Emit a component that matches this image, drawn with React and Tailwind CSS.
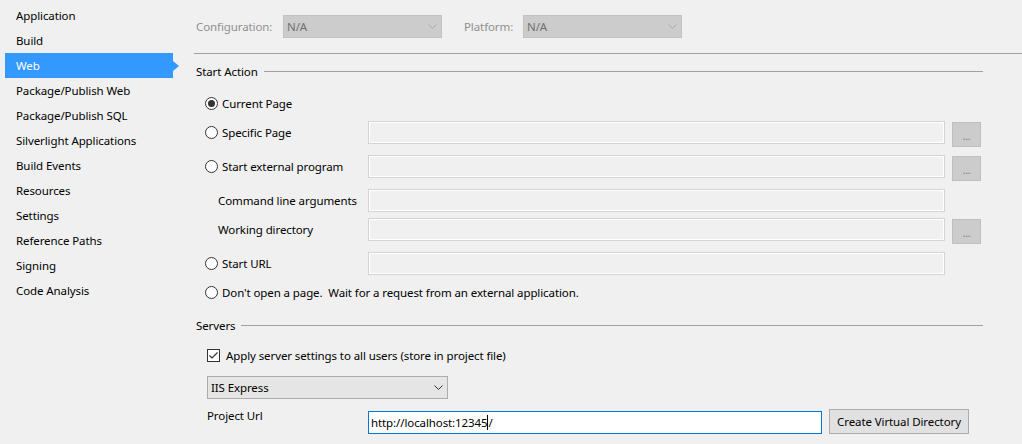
import React from "react";

const NAV = [
  "Application",
  "Build",
  "Web",
  "Package/Publish Web",
  "Package/Publish SQL",
  "Silverlight Applications",
  "Build Events",
  "Resources",
  "Settings",
  "Reference Paths",
  "Signing",
  "Code Analysis",
];

function T({ children, className = "" }) {
  return <span className={"pt-[1px] whitespace-nowrap " + className}>{children}</span>;
}

function Chevron({ color = "#333" }) {
  return (
    <svg width="9" height="5" viewBox="0 0 9 5" className="shrink-0">
      <path d="M0.5 0.5 L4.5 4.5 L8.5 0.5" fill="none" stroke={color} strokeWidth="1" />
    </svg>
  );
}

function Radio({ checked }) {
  return (
    <div className="w-[13px] h-[13px] shrink-0 rounded-full border border-[#333] bg-white flex items-center justify-center">
      {checked && <div className="w-[7px] h-[7px] rounded-full bg-[#333]" />}
    </div>
  );
}

function TextBox() {
  return (
    <div className="w-[577px] h-[23px] shrink-0 border border-[#d4d4d4] shadow-[inset_0_0_0_1px_#ffffff] bg-[#f0f0f0]" />
  );
}

function Browse() {
  return (
    <div className="ml-[7px] mt-[1px] self-start w-[29px] h-[25px] shrink-0 bg-[#cccccc] border border-[#bfbfbf] flex items-center justify-center text-[10px] leading-none text-[#7a7a7a] pt-[3px]">
      ...
    </div>
  );
}

function SectionHeader({ title }) {
  return (
    <div className="h-[18px] flex items-center pl-[16px]">
      <T className="text-black">{title}</T>
      <div className="flex-1 h-px bg-[#a0a0a0] ml-[6px] mr-[39px]" />
    </div>
  );
}

export default function App() {
  return (
    <div className="w-[1022px] h-[444px] overflow-hidden bg-[#f0f0f0] flex font-['Noto_Sans',sans-serif] text-[11.5px] tracking-[-0.1px] text-black">
      {/* Sidebar */}
      <div className="w-[180px] shrink-0 pt-[3px]">
        {NAV.map((it) =>
          it === "Web" ? (
            <div
              key={it}
              className="relative h-[25px] ml-[5px] w-[168px] bg-[#3399ff] text-white flex items-center pl-[11px]"
            >
              <T>Web</T>
              <div className="absolute left-full top-1/2 -translate-y-1/2 w-0 h-0 border-y-[5px] border-y-transparent border-l-[6px] border-l-[#3399ff]" />
            </div>
          ) : (
            <div key={it} className="h-[25px] flex items-center pl-[16px]">
              <T>{it}</T>
            </div>
          )
        )}
      </div>

      {/* Main */}
      <div className="flex-1 min-w-0 flex flex-col">
        <div className="h-[53px] pt-[15px] pl-[16px] flex items-start">
          <div className="w-[87px] h-[23px] flex items-center text-[#8f8f8f]">
            <T>Configuration:</T>
          </div>
          <div className="w-[159px] h-[23px] bg-[#cccccc] border border-[#c2c2c2] flex items-center pl-[3px] pr-[4px] text-[#707070]">
            <T className="flex-1">N/A</T>
            <Chevron color="#a8a8a8" />
          </div>
          <div className="ml-[22px] w-[59px] h-[23px] flex items-center text-[#8f8f8f]">
            <T>Platform:</T>
          </div>
          <div className="w-[159px] h-[23px] bg-[#cccccc] border border-[#c2c2c2] flex items-center pl-[3px] pr-[4px] text-[#707070]">
            <T className="flex-1">N/A</T>
            <Chevron color="#a8a8a8" />
          </div>
        </div>
        <div className="ml-[14px] h-px bg-[#a0a0a0]" />

        <div className="mt-[8px]">
          <SectionHeader title="Start Action" />
        </div>

        <div className="pl-[25px] flex flex-col">
          <div className="mt-[13px] h-[20px] flex items-center gap-[4px]">
            <Radio checked />
            <T>Current Page</T>
          </div>

          <div className="mt-[8px] h-[23px] flex items-center">
            <div className="w-[163px] flex items-center gap-[4px]">
              <Radio />
              <T>Specific Page</T>
            </div>
            <TextBox />
            <Browse />
          </div>

          <div className="mt-[11px] h-[23px] flex items-center">
            <div className="w-[163px] flex items-center gap-[4px]">
              <Radio />
              <T>Start external program</T>
            </div>
            <TextBox />
            <Browse />
          </div>

          <div className="mt-[11px] h-[23px] flex items-center">
            <div className="w-[163px] pl-[13px] flex items-center">
              <T>Command line arguments</T>
            </div>
            <TextBox />
          </div>

          <div className="mt-[6px] h-[23px] flex items-center">
            <div className="w-[163px] pl-[13px] flex items-center">
              <T>Working directory</T>
            </div>
            <TextBox />
            <Browse />
          </div>

          <div className="mt-[11px] h-[23px] flex items-center">
            <div className="w-[163px] flex items-center gap-[4px]">
              <Radio />
              <T>Start URL</T>
            </div>
            <TextBox />
          </div>

          <div className="mt-[7px] h-[20px] flex items-center gap-[4px]">
            <Radio />
            <T>Don't open a page.&nbsp; Wait for a request from an external application.</T>
          </div>
        </div>

        <div className="mt-[14px]">
          <SectionHeader title="Servers" />
        </div>

        <div className="pl-[27px] flex flex-col">
          <div className="mt-[11px] h-[20px] flex items-center gap-[6px]">
            <div className="w-[13px] h-[13px] shrink-0 border border-[#333] bg-white flex items-center justify-center">
              <svg width="11" height="11" viewBox="0 0 11 11">
                <path d="M1.5 5.5 L4 8 L9.5 2.5" fill="none" stroke="#333" strokeWidth="1.2" />
              </svg>
            </div>
            <T>Apply server settings to all users (store in project file)</T>
          </div>

          <div className="mt-[11px] w-[241px] h-[23px] bg-[#e5e5e5] border border-[#acacac] flex items-center pl-[3px] pr-[4px]">
            <T className="flex-1">IIS Express</T>
            <Chevron color="#333" />
          </div>

          <div className="mt-[10px] h-[25px] flex items-start">
            <div className="w-[161px] leading-[14px] whitespace-nowrap">Project Url</div>
            <div className="mt-[2px] w-[454px] h-[23px] bg-white border border-[#0078d7] flex items-center pl-[2px] whitespace-nowrap">
              <T>http://localhost:12345</T>
              <span className="inline-block w-px h-[15px] bg-black" />
              <T>/</T>
            </div>
            <div className="ml-[7px] w-[140px] h-[25px] bg-[#e1e1e1] border border-[#adadad] flex items-center justify-center">
              <T>Create Virtual Directory</T>
            </div>
          </div>
        </div>
      </div>
    </div>
  );
}
